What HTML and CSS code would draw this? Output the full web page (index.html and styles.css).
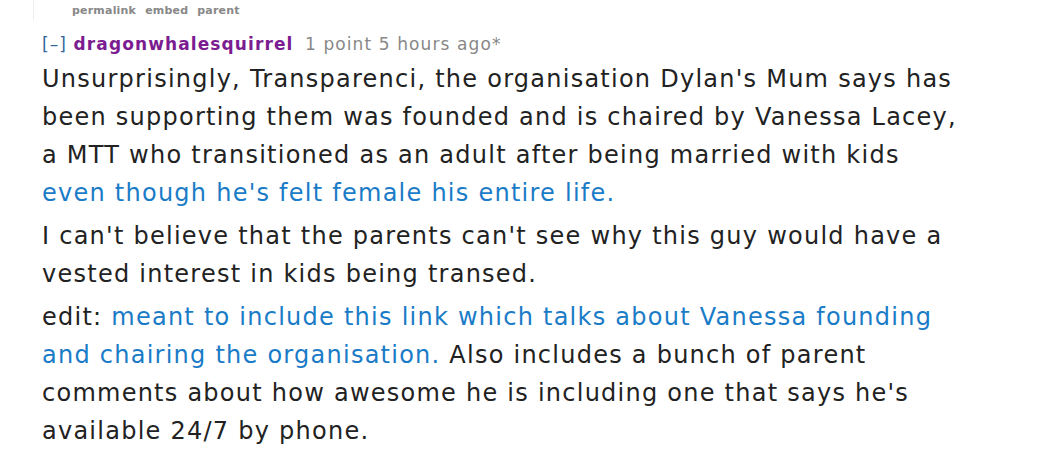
FILE: index.html
```html
<!DOCTYPE html>
<html>
<head>
<meta charset="utf-8">
<link rel="stylesheet" href="styles.css">
</head>
<body>
<div class="parent-foot">
  <ul class="buttons">
    <li>permalink</li>
    <li>embed</li>
    <li>parent</li>
  </ul>
</div>
<div class="comment">
  <p class="tagline">
    <span class="expand">[–]</span>
    <span class="author">dragonwhalesquirrel</span>
    <span class="score">1 point</span>
    <span class="time">5 hours ago*</span>
  </p>
  <div class="md">
    <p>Unsurprisingly, Transparenci, the organisation Dylan's Mum says has been supporting them was founded and is chaired by Vanessa Lacey, a MTT who transitioned as an adult after being married with kids <a href="#">even though he's felt female his entire life.</a></p>
    <p>I can't believe that the parents can't see why this guy would have a vested interest in kids being transed.</p>
    <p>edit: <a href="#">meant to include this link which talks about Vanessa founding and chairing the organisation.</a> Also includes a bunch of parent comments about how awesome he is including one that says he's available 24/7 by phone.</p>
  </div>
</div>
</body>
</html>
```
FILE: styles.css
```css
html, body {
  margin: 0;
  padding: 0;
  background: #fff;
}
body {
  font-family: "DejaVu Sans", Verdana, sans-serif;
  color: #222;
}
.parent-foot {
  margin-left: 33px;
  border-left: 1px solid #eee;
  height: 20px;
  padding-left: 38px;
}
.buttons {
  list-style: none;
  margin: 0;
  padding: 4px 0 0 0;
  display: flex;
  gap: 9px;
  font-size: 11px;
  font-weight: bold;
  color: #888;
  line-height: 14px;
  letter-spacing: 0.2px;
}
.comment {
  padding-left: 42px;
}
.tagline {
  margin: 13px 0 0 0;
  font-size: 17px;
  line-height: 22px;
  color: #888;
  white-space: nowrap;
  letter-spacing: 1.1px;
}
.expand {
  color: #369;
}
.author {
  color: #7b1c91;
  font-weight: bold;
  margin-right: 5px;
}
.md {
  font-size: 24px;
  line-height: 38px;
  letter-spacing: 1.25px;
  max-width: 918px;
}
.md p {
  margin: 0 0 5px 0;
}
.md p:first-child {
  margin-top: 5px;
}
.md a {
  color: #1a7bc7;
  text-decoration: none;
}
```
